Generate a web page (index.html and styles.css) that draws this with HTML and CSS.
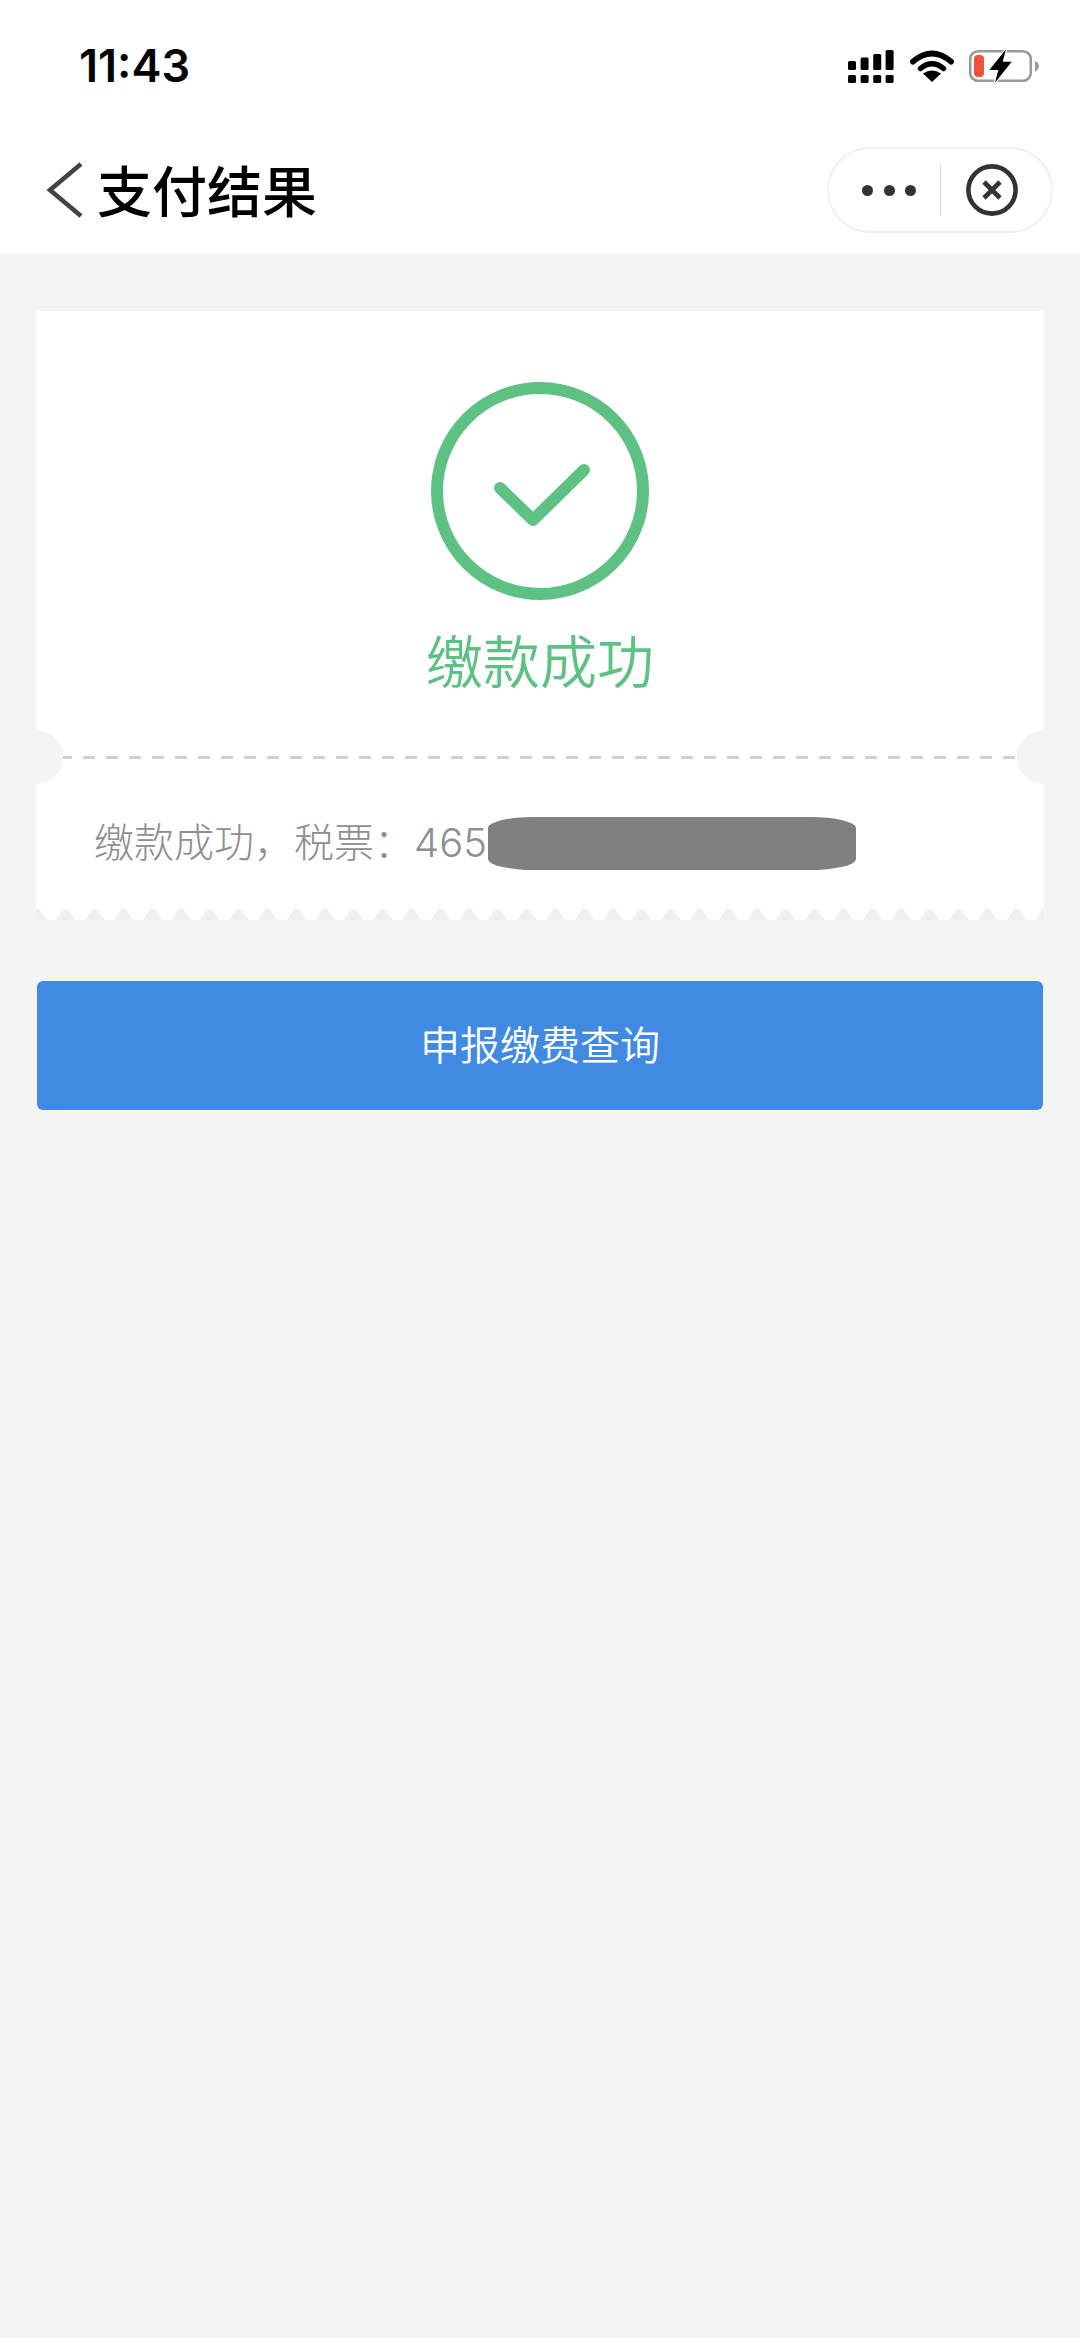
FILE: index.html
```html
<!DOCTYPE html>
<html lang="zh-CN">
<head>
    <meta charset="UTF-8">
    <meta name="viewport" content="width=device-width, initial-scale=1.0">
    <title>支付结果</title>
    <link rel="stylesheet" href="styles.css">
</head>
<body>
    <header class="top-bar">
        <div class="status-bar">
            <span class="time">11:43</span>
            <div class="status-icons">
                <svg class="icon-signal" width="46" height="33" viewBox="0 0 46 33" fill="#000">
                    <rect x="0" y="25" width="8" height="8" rx="1.5"/>
                    <rect x="12.6" y="25" width="8" height="8" rx="1.5"/>
                    <rect x="25.2" y="25" width="8" height="8" rx="1.5"/>
                    <rect x="37.6" y="25" width="8" height="8" rx="1.5"/>
                    <rect x="0" y="11" width="8" height="9" rx="1.5"/>
                    <rect x="12.6" y="7.5" width="8" height="12.5" rx="1.5"/>
                    <rect x="25.2" y="4" width="8" height="16" rx="1.5"/>
                    <rect x="37.6" y="0" width="8" height="20" rx="1.5"/>
                </svg>
                <svg class="icon-wifi" width="44" height="33" viewBox="0 0 44 33">
                    <path d="M3 12.5 Q22 -3.5 41 12.5" fill="none" stroke="#000" stroke-width="6" stroke-linecap="round"/>
                    <path d="M10.5 19.5 Q22 10 33.5 19.5" fill="none" stroke="#000" stroke-width="5.5" stroke-linecap="round"/>
                    <path d="M13 24.5 Q22 18.5 31 24.5 L22 33 Z" fill="#000"/>
                </svg>
                <svg class="icon-battery" width="71" height="38" viewBox="0 0 71 38">
                    <rect x="1.2" y="3.2" width="60.6" height="29.6" rx="8" fill="none" stroke="#999" stroke-width="2.6"/>
                    <path d="M66 13 Q70 15 70 18 Q70 21 66 24 Z" fill="#999"/>
                    <rect x="5" y="7" width="10" height="22" rx="4" fill="#f0513a"/>
                    <path d="M37 1.3 L20.3 22 L29.3 22 L26 34.7 L42.7 13.7 L33.7 13.7 Z" fill="#000" stroke="#fff" stroke-width="2.5" paint-order="stroke"/>
                </svg>
            </div>
        </div>
        <nav class="nav-bar">
            <div class="nav-left">
                <svg class="icon-back" width="36" height="56" viewBox="0 0 36 56">
                    <path d="M34 2 L3 28 L34 54" fill="none" stroke="#444" stroke-width="4.5"/>
                </svg>
                <h1 class="page-title">支付结果</h1>
            </div>
            <div class="capsule">
                <div class="capsule-more">
                    <span class="dot"></span>
                    <span class="dot"></span>
                    <span class="dot"></span>
                </div>
                <div class="capsule-line"></div>
                <div class="capsule-close">
                    <svg width="52" height="52" viewBox="0 0 52 52">
                        <circle cx="26" cy="26" r="23.6" fill="none" stroke="#333" stroke-width="4.6"/>
                        <path d="M18 18 L34 34 M34 18 L18 34" fill="none" stroke="#333" stroke-width="4.6"/>
                    </svg>
                </div>
            </div>
        </nav>
    </header>

    <main class="content">
        <section class="ticket">
            <div class="ticket-head">
                <svg class="icon-success" width="218" height="218" viewBox="0 0 218 218">
                    <circle cx="109" cy="109" r="103" fill="none" stroke="#5ec184" stroke-width="12"/>
                    <path d="M69 106 L102 138 L153 88" fill="none" stroke="#5ec184" stroke-width="12" stroke-linecap="round" stroke-linejoin="round"/>
                </svg>
                <div class="result-text">缴款成功</div>
            </div>
            <div class="ticket-line"></div>
            <div class="ticket-body">
                <span>缴款成功，税票：<span class="digits">465</span></span><span class="masked"></span>
            </div>
            <svg class="ticket-edge" width="1008" height="12">
                <defs>
                    <pattern id="edge" width="28.8" height="12" patternUnits="userSpaceOnUse" x="-13.4">
                        <path d="M5 12 L11.5 2 Q14.4 -0.5 17.3 2 L23.8 12 Z" fill="#f0f0f0"/>
                    </pattern>
                </defs>
                <rect width="1008" height="12" fill="url(#edge)"/>
            </svg>
            <!-- notches on the tear line -->
            <span class="notch notch-left"></span>
            <span class="notch notch-right"></span>
        </section>

        <button type="button" class="btn">申报缴费查询</button>
    </main>
</body>
</html>
```

FILE: styles.css
```css
* {
    box-sizing: border-box;
}

body {
    font-family: "Noto Sans CJK SC", "Noto Sans", sans-serif;
    margin: 0;
    padding: 0;
    width: 1080px;
    height: 2338px;
    overflow: hidden;
    background: #f4f4f4;
}

.top-bar {
    background: white;
    height: 254px;
}

.status-bar {
    height: 90px;
    padding: 48px 40px 0 79px;
    display: flex;
    justify-content: space-between;
    align-items: flex-start;
}

.time {
    font-family: Inter, "Liberation Sans", sans-serif;
    font-size: 45px;
    font-weight: 600;
    line-height: 36px;
    color: #000;
}

.status-icons {
    display: flex;
    align-items: flex-start;
    margin-top: 2px;
}

.icon-signal {
    margin-right: 16px;
}

.icon-wifi {
    margin-right: 15px;
    margin-top: -1px;
}

.icon-battery {
    margin-top: -2px;
}

.nav-bar {
    height: 164px;
    padding: 0 27px 0 47px;
    display: flex;
    justify-content: space-between;
    align-items: flex-start;
}

.nav-left {
    display: flex;
    align-items: flex-start;
    margin-top: 72px;
}

.icon-back {
    display: block;
}

.page-title {
    margin: -2px 0 0 14px;
    font-size: 55px;
    font-weight: 500;
    line-height: 56px;
    color: #000;
}

.capsule {
    width: 226px;
    height: 86px;
    margin-top: 57px;
    border: 2px solid #f0f0f0;
    border-radius: 43px;
    display: flex;
    align-items: center;
}

.capsule-more {
    width: 111px;
    display: flex;
    justify-content: center;
    gap: 10.5px;
    padding-left: 9px;
}

.dot {
    width: 11px;
    height: 11px;
    border-radius: 50%;
    background: #333;
}

.capsule-line {
    width: 1px;
    height: 52px;
    background: #d8d8d8;
}

.capsule-close {
    flex: 1;
    display: flex;
    justify-content: center;
    padding-right: 9px;
}

.capsule-close svg {
    display: block;
}

.content {
    padding: 57px 36px 0;
}

.ticket {
    position: relative;
    background: white;
    overflow: hidden;
}

.ticket-head {
    height: 445px;
    padding-top: 71px;
    display: flex;
    flex-direction: column;
    align-items: center;
}

.icon-success {
    display: block;
}

.result-text {
    margin-top: 23px;
    font-size: 57px;
    font-weight: 350;
    line-height: 70px;
    color: #5ec184;
}

.ticket-line {
    height: 3px;
    margin: 0 24px;
    background: repeating-linear-gradient(to right, #cfcfcf 0, #cfcfcf 12px, transparent 12px, transparent 23px);
}

.ticket-body {
    height: 149px;
    padding: 55px 0 0 58px;
    display: flex;
    align-items: flex-start;
    font-size: 40px;
    font-weight: 300;
    line-height: 52px;
    color: #8e8e8e;
}

.digits {
    font-family: Inter, "Liberation Sans", sans-serif;
    font-weight: 300;
}

.masked {
    width: 368px;
    height: 53px;
    margin: 3px 0 0 1px;
    background: #808080;
    border-radius: 46px / 11px;
}

.ticket-edge {
    display: block;
}

.notch {
    position: absolute;
    top: 419px;
    width: 54px;
    height: 54px;
    border-radius: 50%;
    background: #f4f4f4;
}

.notch-left {
    left: -27px;
}

.notch-right {
    right: -27px;
}

.btn {
    display: block;
    width: 1006px;
    height: 129px;
    margin: 61px 0 0 1px;
    padding: 0 0 5px;
    background: #418ae3;
    color: white;
    text-align: center;
    border: none;
    border-radius: 6px;
    font-family: inherit;
    font-size: 40px;
    font-weight: 350;
    cursor: pointer;
}
```
